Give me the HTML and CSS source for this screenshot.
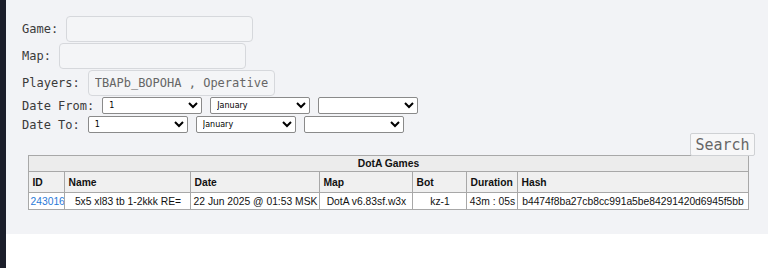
FILE: index.html
```html
<!DOCTYPE html>
<html>
<head>
<meta charset="utf-8">
<link rel="stylesheet" href="styles.css">
</head>
<body>
<div class="frame">
  <div class="panel">
    <div class="field"><label class="lbl">Game:</label><input class="txt" type="text"></div>
    <div class="field"><label class="lbl">Map:</label><input class="txt" type="text"></div>
    <div class="field"><label class="lbl">Players:</label><input class="txt" type="text" value="TBAPb_BOPOHA , Operative"></div>
    <div class="field date"><label class="lbl">Date From:</label>
      <select class="sel"><option>1</option></select>
      <select class="sel"><option>January</option></select>
      <select class="sel"><option></option></select>
    </div>
    <div class="field date"><label class="lbl">Date To:</label>
      <select class="sel"><option>1</option></select>
      <select class="sel"><option>January</option></select>
      <select class="sel"><option></option></select>
    </div>
    <div class="actions"><button class="btn">Search</button></div>
    <table class="games">
      <colgroup>
        <col class="c-id"><col class="c-name"><col class="c-date"><col class="c-map"><col class="c-bot"><col class="c-dur"><col class="c-hash">
      </colgroup>
      <tr class="title"><th colspan="7">DotA Games</th></tr>
      <tr class="head"><th>ID</th><th>Name</th><th>Date</th><th>Map</th><th>Bot</th><th>Duration</th><th>Hash</th></tr>
      <tr class="row"><td class="id"><a href="#">243016</a></td><td>5x5 xl83 tb 1-2kkk RE=</td><td>22 Jun 2025 @ 01:53 MSK</td><td>DotA v6.83sf.w3x</td><td>kz-1</td><td>43m : 05s</td><td>b4474f8ba27cb8cc991a5be84291420d6945f5bb</td></tr>
    </table>
  </div>
</div>
</body>
</html>
```

FILE: styles.css
```css
html, body {
  margin: 0;
  padding: 0;
  background: #ffffff;
}
.frame {
  border-left: 6px solid #1b1e2a;
  min-height: 268px;
  box-sizing: border-box;
  background: #ffffff;
}
.panel {
  background: #f2f3f6;
  height: 234px;
  box-sizing: border-box;
  padding: 16px 13px 0 16px;
  font-family: "DejaVu Sans Mono", monospace;
  font-size: 12px;
  color: #333;
}
.field {
  display: flex;
  align-items: center;
  gap: 8px;
  margin-bottom: 1px;
}
.lbl {
  font-family: "DejaVu Sans Mono", monospace;
  font-size: 12px;
  color: #3a3a3a;
}
.txt {
  box-sizing: border-box;
  width: 187px;
  height: 26px;
  margin: 0;
  padding: 0 6px;
  border: 1px solid #d6d8dc;
  border-radius: 4px;
  background: #f4f5f7;
  font-family: "DejaVu Sans Mono", monospace;
  font-size: 12px;
  color: #666;
  outline: none;
}
.date {
  margin-top: 1px;
  margin-bottom: 2px;
}
.field.date + .field.date {
  margin-top: 0;
}
.sel {
  box-sizing: border-box;
  width: 100px;
  height: 17px;
  margin: 0;
  font-family: "DejaVu Sans", sans-serif;
  font-size: 8px;
  color: #000;
  background: #fff;
  border: 1px solid #8a8a8a;
  border-radius: 2px;
  padding: 0 2px;
}
.actions {
  display: flex;
  justify-content: flex-end;
  margin-top: -2px;
}
.btn {
  box-sizing: border-box;
  width: 65px;
  height: 23px;
  padding: 0;
  font-family: "DejaVu Sans Mono", monospace;
  font-size: 15px;
  color: #666;
  background: #f7f7f8;
  border: 1px solid #cfd1d4;
  border-radius: 2px;
}
.games {
  margin: -1px auto 0;
  width: 719px;
  border-collapse: collapse;
  table-layout: fixed;
  font-family: "Liberation Sans", Arial, sans-serif;
  font-size: 10.3px;
  color: #111;
  border: 1px solid #9a9a9a;
}
.c-id { width: 36px; }
.c-name { width: 126px; }
.c-date { width: 129px; }
.c-map { width: 93px; }
.c-bot { width: 54px; }
.c-dur { width: 51px; }
.c-hash { width: 230px; }
.games th, .games td {
  border: 1px solid #a8a8a8;
  white-space: nowrap;
  overflow: hidden;
  padding: 0 3px;
}
.title th {
  height: 15px;
  background: #ececec;
  text-align: center;
  font-weight: bold;
}
.head th {
  height: 20px;
  background: #f0f0f0;
  text-align: left;
  font-weight: bold;
}
.row td {
  height: 16px;
  background: #fff;
  text-align: center;
  padding: 0 1px;
}
.row td.id {
  text-align: left;
}
.id a {
  color: #2a7ad8;
  text-decoration: none;
}
```
